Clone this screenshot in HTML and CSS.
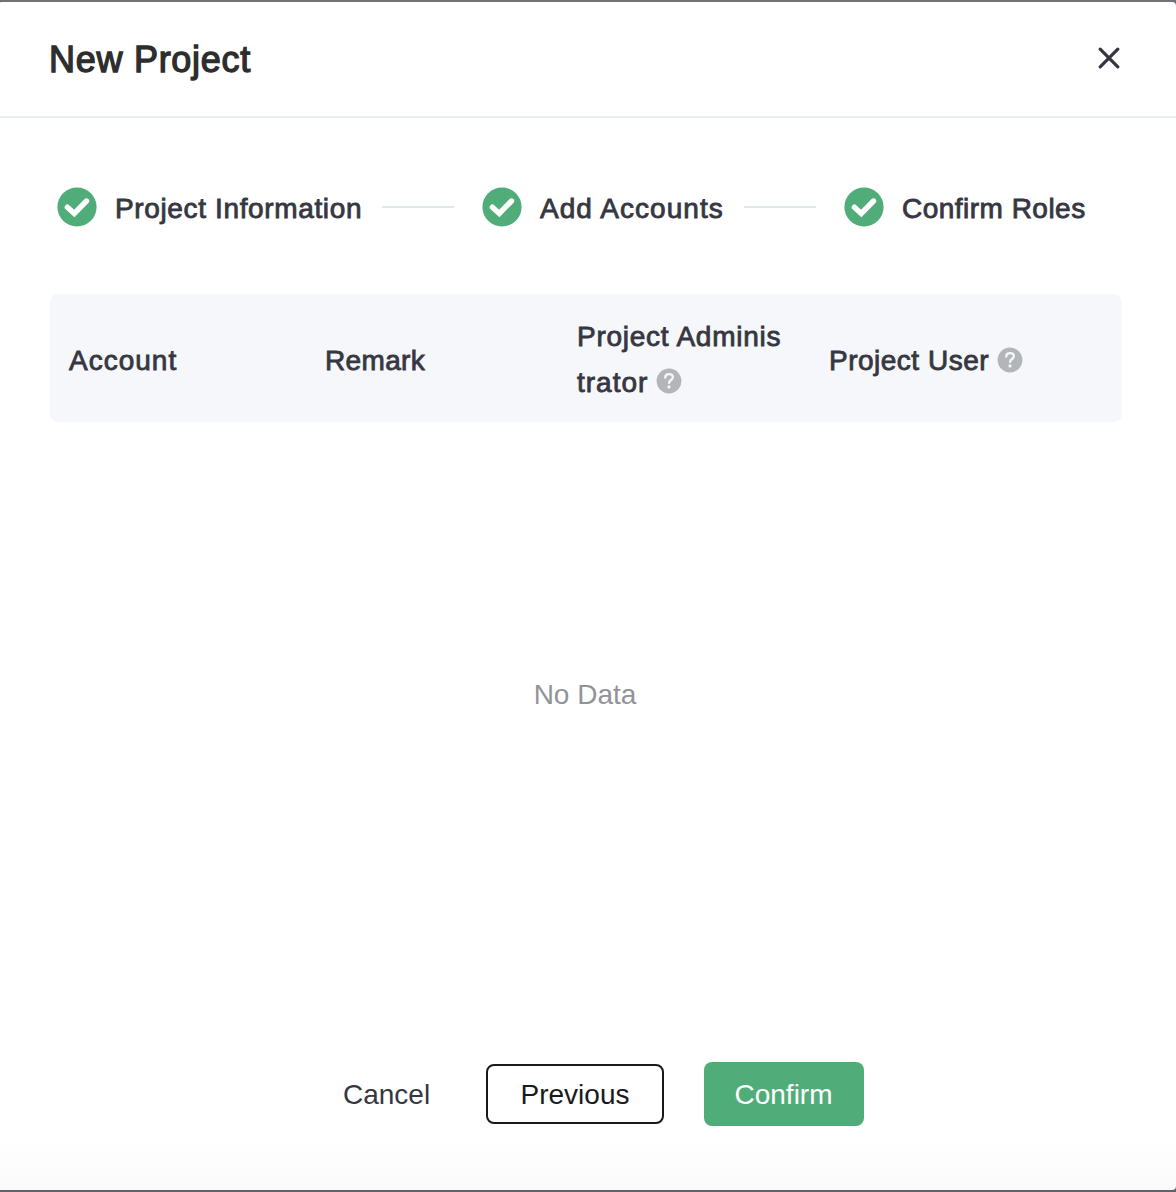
FILE: index.html
```html
<!DOCTYPE html>
<html lang="en">
<head>
<meta charset="utf-8">
<title>New Project</title>
<link rel="stylesheet" href="styles.css">
</head>
<body>
<svg class="sprite" width="0" height="0" aria-hidden="true">
  <symbol id="check" viewBox="0 0 40 40">
    <circle cx="20" cy="20" r="19.6" fill="#50ad79"/>
    <path d="M10.4 20.2 17.3 26.4 29.5 14" fill="none" stroke="#fff" stroke-width="5.4" stroke-linecap="round" stroke-linejoin="miter"/>
  </symbol>
  <symbol id="help" viewBox="0 0 26 26">
    <circle cx="13" cy="13" r="12.4" fill="#b2b6b9"/>
    <path d="M9.2 9.5C9.4 7.2 11 6.1 13 6.1c2.2 0 3.9 1.3 3.9 3.2 0 2.6-3.8 2.8-3.8 5.6" fill="none" stroke="#f5f7fb" stroke-width="2.3" stroke-linecap="round"/>
    <circle cx="13" cy="18.9" r="1.6" fill="#f5f7fb"/>
  </symbol>
</svg>
<main class="dialog">
  <header class="header">
    <h1 class="title">New Project</h1>
    <button class="close" aria-label="Close">
      <svg width="22" height="22" viewBox="0 0 22 22"><path d="M2.2 2.2 19.8 19.8M19.8 2.2 2.2 19.8" stroke="#34353f" stroke-width="3.2" stroke-linecap="round"/></svg>
    </button>
  </header>
  <section class="content">
    <div class="steps">
      <svg class="step-icon"><use href="#check"/></svg>
      <span class="step-label label-information">Project Information</span>
      <span class="step-line"></span>
      <svg class="step-icon"><use href="#check"/></svg>
      <span class="step-label label-accounts">Add Accounts</span>
      <span class="step-line"></span>
      <svg class="step-icon"><use href="#check"/></svg>
      <span class="step-label label-roles">Confirm Roles</span>
    </div>
    <div class="table-head">
      <div class="cell cell-account">Account</div>
      <div class="cell cell-remark">Remark</div>
      <div class="cell cell-admin"><div>Project Adminis</div><div class="cell-line cell-wrap">trator<svg class="help"><use href="#help"/></svg></div></div>
      <div class="cell cell-user"><div class="cell-line">Project User<svg class="help"><use href="#help"/></svg></div></div>
    </div>
    <div class="empty">No Data</div>
  </section>
  <footer class="footer">
    <button class="btn cancel">Cancel</button>
    <button class="btn previous">Previous</button>
    <button class="btn confirm">Confirm</button>
  </footer>
</main>
</body>
</html>
```
FILE: styles.css
```css
* { box-sizing: border-box; }
body {
  margin: 0;
  height: 1192px;
  padding: 2px 0;
  background: linear-gradient(#747176 50%, #626268 50%);
  font-family: "Liberation Sans", Arial, sans-serif;
  font-size: 28px;
  color: #363741;
}
.sprite { position: absolute; }
.dialog {
  display: flex;
  flex-direction: column;
  height: 1188px;
  background: linear-gradient(#fff 1138px, #fafafa);
  border-radius: 1px 4px 4px 0;
}
.header {
  display: flex;
  justify-content: space-between;
  height: 116px;
  padding: 0 56px 0 49px;
  border-bottom: 2px solid #e9edf4;
}
.title {
  margin: 0;
  padding-top: 36px;
  font-size: 36px;
  line-height: 44px;
  font-weight: 400;
  letter-spacing: 0.72px;
  color: #2d2d2d;
  -webkit-text-stroke: 1.3px #2d2d2d;
}
.close {
  width: 22px;
  height: 22px;
  margin-top: 45px;
  padding: 0;
  border: 0;
  background: none;
}
.close svg { display: block; }
.content {
  flex: 1;
  padding: 68px 54px 0 50px;
}
.steps {
  display: flex;
  align-items: center;
  height: 42px;
  padding-left: 7px;
}
.step-icon {
  flex: none;
  width: 40px;
  height: 40px;
}
.step-label {
  flex: none;
  margin-left: 18px;
  padding-top: 3px;
  line-height: 32px;
  white-space: nowrap;
  letter-spacing: 0.64px;
  -webkit-text-stroke: 0.85px #363741;
}
.label-information { width: 247px; }
.label-accounts { width: 184px; letter-spacing: 1.05px; }
.label-roles { letter-spacing: 0.48px; }
.step-line {
  flex: none;
  width: 72px;
  height: 2px;
  margin: 0 28px 0 20px;
  background: #e1e9e7;
}
.table-head {
  display: grid;
  grid-template-columns: 256px 252px 252px 1fr;
  align-items: center;
  height: 128px;
  margin-top: 66px;
  padding-left: 19px;
  border-radius: 8px;
  background: #f5f7fb;
}
.cell {
  padding-top: 6px;
  line-height: 46px;
  white-space: nowrap;
  letter-spacing: 0.5px;
  -webkit-text-stroke: 0.85px #363741;
}
.cell-account { letter-spacing: 1px; }
.cell-remark { letter-spacing: 0.35px; }
.cell-admin {
  padding-top: 3px;
  letter-spacing: 0.75px;
}
.cell-line {
  display: flex;
  align-items: center;
  height: 46px;
}
.cell-wrap { letter-spacing: 1px; }
.help {
  width: 26px;
  height: 26px;
  margin: -3px 0 0 8px;
  -webkit-text-stroke: 0;
}
.empty {
  padding: 250px 2px 0 0;
  line-height: 46px;
  text-align: center;
  color: #929399;
}
.footer {
  display: flex;
  align-items: center;
  height: 64px;
  margin-bottom: 64px;
  padding-left: 343px;
}
.btn {
  height: 64px;
  padding: 2px 0 0;
  border: 0;
  background: none;
  font: inherit;
  color: #363741;
  border-radius: 8px;
}
.cancel { width: 87px; margin-right: 56px; }
.previous {
  width: 178px;
  height: 60px;
  margin-right: 40px;
  border: 2px solid #1a1a1c;
  color: #1a1a1c;
}
.confirm {
  width: 160px;
  padding-right: 1px;
  background: #50ad79;
  color: #fff;
}
```
